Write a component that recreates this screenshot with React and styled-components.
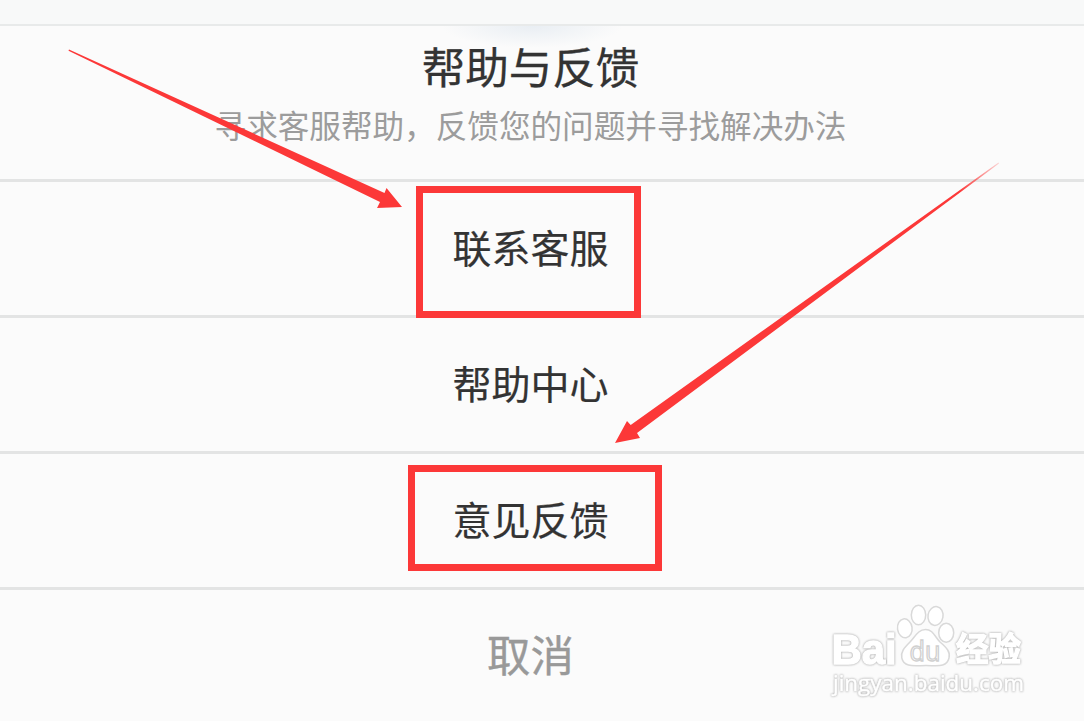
import React from 'react';
import styled, { createGlobalStyle } from 'styled-components';

const ACTIONS = [
  { id: 'contact', label: '联系客服', mark: { top: 4, left: 416, width: 225, height: 132 } },
  { id: 'center', label: '帮助中心' },
  { id: 'feedback', label: '意见反馈', mark: { top: 11, left: 408, width: 254, height: 106 } },
];

const App = () => {
  return (
    <StPage>
      <GlobalStyle />
      <StTopBar />
      <StSheet>
        <StHeader>
          <StTitle>帮助与反馈</StTitle>
          <StDesc>寻求客服帮助，反馈您的问题并寻找解决办法</StDesc>
        </StHeader>
        {ACTIONS.map(({ id, label, mark }) => (
          <StAction key={id} type='button'>
            {label}
            {mark && <StMark $mark={mark} />}
          </StAction>
        ))}
        <StCancel type='button'>取消</StCancel>
      </StSheet>

      <StArrows viewBox='0 0 1084 721'>
        <defs>
          <linearGradient id='tail' gradientUnits='userSpaceOnUse' x1='999' y1='163' x2='960' y2='192'>
            <stop offset='0' stopColor='#fc3838' stopOpacity='0.2' />
            <stop offset='1' stopColor='#fc3838' />
          </linearGradient>
        </defs>
        <path fill='#fc3838' d='M69 49.5 L384.5 193 L386.5 188 L402 207 L377 208 L380 202 L68.5 50.8 Z' />
        <path fill='url(#tail)' d='M998.5 162.5 L630.7 425 L627 421 L615 443 L640 438 L637 433 L999 163.5 Z' />
      </StArrows>

      <Watermark />
    </StPage>
  );
};

const Watermark = () => (
  <StWatermark viewBox='0 0 210 110'>
    <StLogoText x='9.5' y='73' fontSize='43' textLength='65' lengthAdjust='spacingAndGlyphs'>
      Bai
    </StLogoText>
    <g fill='#fff' stroke='#d9d9d9' strokeWidth='1.5'>
      <ellipse cx='82.8' cy='37.3' rx='7.3' ry='9.5' transform='rotate(-8 82.8 37.3)' />
      <ellipse cx='96.5' cy='24' rx='7.2' ry='9.8' />
      <ellipse cx='113.5' cy='25' rx='7.5' ry='9.5' transform='rotate(10 113.5 25)' />
      <ellipse cx='124.2' cy='41.8' rx='7.5' ry='9.5' />
      <path d='M103.5 38.5 C111 38.5 113 46 118 51 C125 57 128.5 61 127 67 C124.5 77 115 74.5 104 74.5 C93 74.5 82 77 79.8 67 C78.5 61 82 57 88 51 C93 46 96 38.5 103.5 38.5 Z' />
    </g>
    <StDu x='87.5' y='69.5' textLength='31' lengthAdjust='spacingAndGlyphs'>
      du
    </StDu>
    <StLogoText x='134' y='70' fontSize='33' textLength='65' lengthAdjust='spacingAndGlyphs'>
      经验
    </StLogoText>
    <StUrl x='11' y='99.5' textLength='191' lengthAdjust='spacingAndGlyphs'>
      jingyan.baidu.com
    </StUrl>
  </StWatermark>
);

export default App;

const GlobalStyle = createGlobalStyle`
  * {
    box-sizing: border-box;
  }

  body {
    margin: 0;
    overflow: hidden;
    background-color: #fbfbfb;
  }
`;

const StPage = styled.main`
  display: flex;
  flex-direction: column;
  position: relative;

  width: 1084px;
  height: 721px;
  overflow: hidden;

  font-family: 'Noto Sans CJK SC', sans-serif;
  background-color: #fbfbfb;
`;

const StTopBar = styled.div`
  flex: none;
  height: 26px;
  border-bottom: 2px solid #e8eaea;
  background-color: #f8f9f9;
`;

const StSheet = styled.section`
  display: flex;
  flex-direction: column;
  flex: 1;
`;

const StHeader = styled.header`
  display: flex;
  flex-direction: column;
  align-items: center;
  flex: none;

  height: 156px;
  padding: 9px 23px 0 0;
  border-bottom: 3px solid #e3e4e4;
  background: radial-gradient(ellipse 90px 22px at 532px 0, #e9eef3, rgba(251, 251, 251, 0));
`;

const StTitle = styled.h1`
  margin: 0;

  font-weight: 400;
  font-size: 43.5px;
  line-height: 62px;
  color: #333333;
  -webkit-text-stroke: 0.3px #333333;
`;

const StDesc = styled.p`
  margin: 4px 0 0;

  font-size: 31.6px;
  line-height: 46px;
  white-space: nowrap;
  color: #9c9c9c;
`;

const StAction = styled.button`
  position: relative;
  flex: none;

  height: 136px;
  padding: 0 23px 6px 0;
  border: none;
  border-bottom: 3px solid #e3e4e4;

  font-family: inherit;
  font-size: 39px;
  color: #333333;
  background-color: transparent;
  -webkit-text-stroke: 0.2px #333333;
`;

const StCancel = styled.button`
  flex: 1;

  padding: 0 23px 5px 0;
  border: none;

  font-family: inherit;
  font-size: 43.5px;
  color: #999999;
  background-color: transparent;
  -webkit-text-stroke: 0.4px #999999;
`;

const StMark = styled.span`
  position: absolute;
  top: ${(props) => props.$mark.top}px;
  left: ${(props) => props.$mark.left}px;
  z-index: 1;

  width: ${(props) => props.$mark.width}px;
  height: ${(props) => props.$mark.height}px;
  border: 7px solid #fc3838;
`;

const StArrows = styled.svg`
  position: absolute;
  top: 0;
  left: 0;
  z-index: 2;

  width: 1084px;
  height: 721px;
  pointer-events: none;
`;

const StWatermark = styled.svg`
  position: absolute;
  top: 591px;
  left: 822px;

  width: 210px;
  height: 110px;
`;

const StLogoText = styled.text`
  font-family: 'Liberation Sans', 'Noto Sans CJK SC', sans-serif;
  font-weight: 700;
  fill: #ffffff;
  stroke: #ffffff;
  stroke-width: 1.4px;
  filter: drop-shadow(0 0 0.8px #b4b4b4) drop-shadow(0 0 0.5px #d2d2d2);
`;

const StDu = styled.text`
  font-family: 'Open Sans', sans-serif;
  font-size: 27px;
  fill: #ffffff;
  stroke: #d0d0d0;
  stroke-width: 1.4px;
`;

const StUrl = styled.text`
  font-family: 'Open Sans', sans-serif;
  font-size: 21.5px;
  fill: #ffffff;
  stroke: #ffffff;
  stroke-width: 0.5px;
  filter: drop-shadow(0 0 0.8px #b4b4b4) drop-shadow(0 0 0.5px #d2d2d2);
`;
